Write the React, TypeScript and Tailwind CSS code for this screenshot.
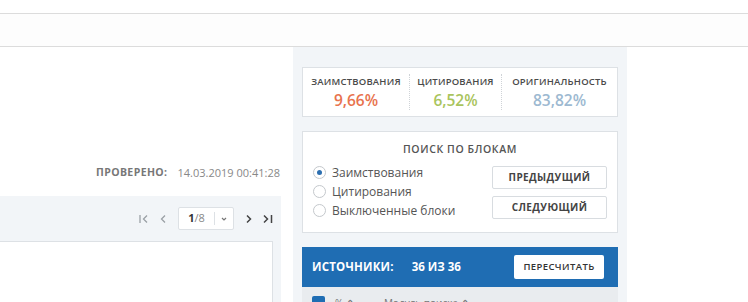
import React from 'react';

const font = { fontFamily: '"Open Sans", "Noto Sans", sans-serif' };

const Radio = ({ checked, label }: { checked?: boolean; label: string }) => (
  <label className="flex items-center gap-[6px] h-[19px] text-[12px] text-[#555]">
    <span className="w-[13px] h-[13px] rounded-full border border-[#c4c8cc] bg-white flex items-center justify-center">
      {checked && <span className="w-[5px] h-[5px] rounded-full bg-[#2c6fb0]" />}
    </span>
    {label}
  </label>
);

const Stat = ({ label, value, color, width, last }: { label: string; value: string; color: string; width: string; last?: boolean }) => (
  <div className={`${width} flex flex-col items-center justify-center ${last ? '' : 'border-r border-dotted border-[#cfd3d7]'}`}>
    <span className="text-[9.5px] font-semibold tracking-[0.2px] text-[#4a4a4a] leading-[13px]">{label}</span>
    <span className={`text-[15.5px] font-semibold leading-[20px] mt-[2px] ${color}`}>{value}</span>
  </div>
);

export default function App() {
  return (
    <div className="w-[748px] h-[302px] overflow-hidden bg-white" style={font}>
      <div className="h-[13px] bg-white" />
      <div className="h-[34px] bg-[#fdfdfd] border-y border-[#dcdcdc]" />
      <div className="flex h-[255px]">
        {/* left column */}
        <div className="w-[293px] flex flex-col">
          <div className="h-[149px] shrink-0 flex items-end justify-end pr-[13px] pb-[15px]">
            <span className="text-[10.5px] font-bold tracking-[0.4px] text-[#777]">ПРОВЕРЕНО:</span>
            <span className="text-[11px] text-[#888] ml-[10px]">14.03.2019 00:41:28</span>
          </div>
          <div className="w-[281px] flex-1 bg-[#f2f5f8] flex flex-col">
            <div className="h-[45px] shrink-0 flex items-center justify-end pr-[7px] text-[#8a8f94]">
              <svg width="12" height="12" viewBox="0 0 12 12" className="mr-[8px]" fill="none" stroke="#9aa0a6" strokeWidth="1.3">
                <path d="M2 2v8M9 2.5 5.5 6 9 9.5" />
              </svg>
              <svg width="10" height="12" viewBox="0 0 10 12" className="mr-[10px]" fill="none" stroke="#9aa0a6" strokeWidth="1.3">
                <path d="M7 2.5 3.5 6 7 9.5" />
              </svg>
              <div className="w-[56px] h-[23px] bg-white border border-[#dde1e5] rounded-[2px] flex items-center text-[11px]">
                <span className="flex-1 text-center">
                  <b className="text-[#333]">1</b><span className="text-[#888]">/8</span>
                </span>
                <span className="w-px h-[13px] bg-[#dde1e5]" />
                <svg width="18" height="10" viewBox="0 0 18 10" fill="none" stroke="#777" strokeWidth="1.2">
                  <path d="M7 4l2 2 2-2" />
                </svg>
              </div>
              <svg width="10" height="12" viewBox="0 0 10 12" className="ml-[10px] mr-[8px]" fill="none" stroke="#444" strokeWidth="1.5">
                <path d="M3 2.5 6.5 6 3 9.5" />
              </svg>
              <svg width="12" height="12" viewBox="0 0 12 12" fill="none" stroke="#444" strokeWidth="1.5">
                <path d="M2 2.5 5.5 6 2 9.5M9.5 2v8" />
              </svg>
            </div>
            <div className="w-[273px] flex-1 bg-white border-t border-r border-[#dde1e5]" />
          </div>
        </div>

        {/* right panel */}
        <div className="w-[334px] bg-[#f2f5f8] px-[9px] pt-[20px] flex flex-col gap-[14px]">
          <div className="h-[50px] shrink-0 bg-white border border-[#dde1e5] flex py-[6px]">
            <Stat label="ЗАИМСТВОВАНИЯ" value="9,66%" color="text-[#e8734e]" width="w-[107px]" />
            <Stat label="ЦИТИРОВАНИЯ" value="6,52%" color="text-[#a9c45d]" width="w-[92px]" />
            <Stat label="ОРИГИНАЛЬНОСТЬ" value="83,82%" color="text-[#9db9d1]" width="flex-1" last />
          </div>

          <div className="h-[102px] shrink-0 bg-white border border-[#dde1e5] px-[10px] pt-[9px]">
            <div className="text-center text-[10.5px] font-semibold tracking-[0.6px] text-[#555] leading-[16px]">
              ПОИСК ПО БЛОКАМ
            </div>
            <div className="flex justify-between mt-[5px]">
              <div className="flex flex-col pt-[1px]">
                <Radio checked label="Заимствования" />
                <Radio label="Цитирования" />
                <Radio label="Выключенные блоки" />
              </div>
              <div className="flex flex-col gap-[7px] pt-[4px]">
                <button className="w-[115px] h-[23px] border border-[#d8dce0] rounded-[2px] bg-white text-[10px] font-bold tracking-[0.4px] text-[#444]">
                  ПРЕДЫДУЩИЙ
                </button>
                <button className="w-[115px] h-[23px] border border-[#d8dce0] rounded-[2px] bg-white text-[10px] font-bold tracking-[0.4px] text-[#444]">
                  СЛЕДУЮЩИЙ
                </button>
              </div>
            </div>
          </div>

          <div className="flex flex-col shrink-0">
            <div className="h-[40px] bg-[#1f6db3] flex items-center pl-[10px] pr-[14px]">
              <span className="text-[11.5px] font-bold tracking-[0.2px] text-white">ИСТОЧНИКИ:</span>
              <span className="text-[11.5px] font-bold text-white ml-[18px]">36 ИЗ 36</span>
              <button className="ml-auto w-[90px] h-[24px] bg-white rounded-[2px] text-[9.5px] font-semibold tracking-[0.4px] text-[#333]">
                ПЕРЕСЧИТАТЬ
              </button>
            </div>
            <div className="h-[30px] bg-[#e9ecef] flex items-start pt-[9px] pl-[10px] text-[10px] text-[#777]">
              <span className="w-[13px] h-[13px] rounded-[2px] bg-[#1f6db3]" />
              <span className="ml-[10px]">% ⇕</span>
              <span className="ml-[30px]">Модуль поиска ⇕</span>
            </div>
          </div>
        </div>
        <div className="flex-1 bg-white" />
      </div>
    </div>
  );
}
